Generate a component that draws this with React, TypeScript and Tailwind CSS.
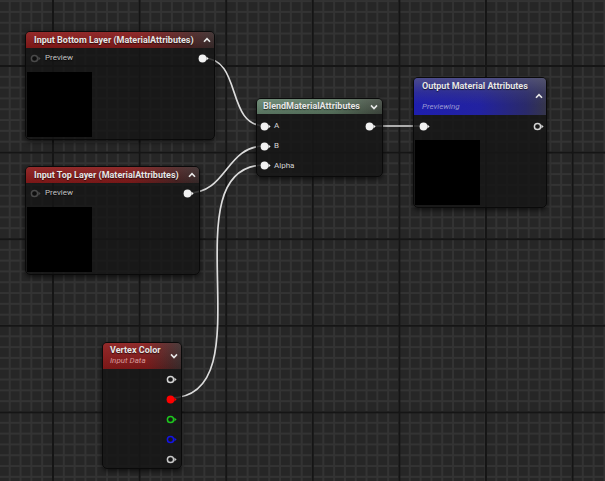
import React from "react";

type PinKind = "filled" | "hollow" | "dark";

function Pin({ kind, color }: { kind: PinKind; color: string }) {
  return (
    <svg width="11" height="9" viewBox="0 0 11 9" className="shrink-0 block">
      {kind === "filled" ? (
        <circle cx="4.5" cy="4.5" r="3.9" fill={color} />
      ) : (
        <circle
          cx="4.5"
          cy="4.5"
          r="3.1"
          fill={kind === "dark" ? "#0e0e0e" : "none"}
          stroke={color}
          strokeWidth="1.5"
        />
      )}
      <path d="M8.4 2.6 L10.6 4.5 L8.4 6.4 Z" fill={color} />
    </svg>
  );
}

function Chevron({ up }: { up?: boolean }) {
  return (
    <svg width="8" height="6" viewBox="0 0 8 6" className="shrink-0 block">
      {up ? (
        <polyline points="1,4.8 4,1.6 7,4.8" fill="none" stroke="#e8e8e8" strokeWidth="1.6" />
      ) : (
        <polyline points="1,1.4 4,4.5 7,1.4" fill="none" stroke="#e8e8e8" strokeWidth="1.6" />
      )}
    </svg>
  );
}

const font = "font-['Roboto','Liberation_Sans',sans-serif]";

export default function App() {
  return (
    <div
      className={`relative w-[605px] h-[481px] overflow-hidden ${font} [background-color:#262626] [background-image:linear-gradient(to_right,#151515_2px,transparent_2px),linear-gradient(to_bottom,#151515_2px,transparent_2px),linear-gradient(to_right,#333333_2px,transparent_2px),linear-gradient(to_bottom,#333333_2px,transparent_2px)] [background-size:86.6px_86.6px,86.6px_86.6px,10.825px_10.825px,10.825px_10.825px] [background-position:52px_65px]`}
    >
      {/* wires */}
      <svg width="605" height="481" className="absolute left-0 top-0">
        <g fill="none" stroke="#dcdcdc" strokeWidth="1.7" strokeLinecap="round">
          <path d="M203 58 C243 58 225 126 265 126" />
          <path d="M188 193 C228 193 225 146 265 146" />
          <path d="M170 398 C270 398 165 165 265 165" />
          <path d="M369 126 L424 126" />
        </g>
      </svg>

      {/* Input Bottom Layer */}
      <div className="absolute left-[25px] top-[31px] w-[190px] h-[109px] rounded-[5px] border border-[#0a0a0a] bg-[rgba(22,22,22,0.82)] shadow-[0_2px_5px_rgba(0,0,0,0.6)] overflow-hidden flex flex-col">
        <div className="h-[16px] shrink-0 flex items-center justify-between pl-[8px] pr-[3px] bg-[linear-gradient(to_bottom,rgba(255,255,255,0.07),rgba(0,0,0,0.12)),linear-gradient(to_right,#8c1a1a_0%,#861b1b_60%,#4c2525_88%,#3a2c2c_100%)]">
          <span className="text-[9px] font-bold leading-none text-[#e6e6e6] whitespace-nowrap [text-shadow:0_1px_1px_rgba(0,0,0,0.6)]">
            Input Bottom Layer (MaterialAttributes)
          </span>
          <Chevron up />
        </div>
        <div className="h-[20px] shrink-0 flex items-center justify-between pl-[4px] pr-[5px]">
          <div className="flex items-center gap-[4px]">
            <Pin kind="dark" color="#4a4a4a" />
            <span className="text-[8px] leading-none text-[#c4c4c4] [text-shadow:0_1px_1px_rgba(0,0,0,0.8)]">Preview</span>
          </div>
          <Pin kind="filled" color="#f2f2f2" />
        </div>
        <div className="ml-[1px] mt-[4px] w-[65px] h-[65px] bg-black" />
      </div>

      {/* Input Top Layer */}
      <div className="absolute left-[25px] top-[166px] w-[175px] h-[109px] rounded-[5px] border border-[#0a0a0a] bg-[rgba(22,22,22,0.82)] shadow-[0_2px_5px_rgba(0,0,0,0.6)] overflow-hidden flex flex-col">
        <div className="h-[16px] shrink-0 flex items-center justify-between pl-[8px] pr-[3px] bg-[linear-gradient(to_bottom,rgba(255,255,255,0.07),rgba(0,0,0,0.12)),linear-gradient(to_right,#8c1a1a_0%,#861b1b_60%,#4c2525_88%,#3a2c2c_100%)]">
          <span className="text-[9px] font-bold leading-none text-[#e6e6e6] whitespace-nowrap [text-shadow:0_1px_1px_rgba(0,0,0,0.6)]">
            Input Top Layer (MaterialAttributes)
          </span>
          <Chevron up />
        </div>
        <div className="h-[20px] shrink-0 flex items-center justify-between pl-[4px] pr-[5px]">
          <div className="flex items-center gap-[4px]">
            <Pin kind="dark" color="#4a4a4a" />
            <span className="text-[8px] leading-none text-[#c4c4c4] [text-shadow:0_1px_1px_rgba(0,0,0,0.8)]">Preview</span>
          </div>
          <Pin kind="filled" color="#f2f2f2" />
        </div>
        <div className="ml-[1px] mt-[4px] w-[65px] h-[65px] bg-black" />
      </div>

      {/* BlendMaterialAttributes */}
      <div className="absolute left-[256px] top-[98px] w-[127px] h-[79px] rounded-[5px] border border-[#0a0a0a] bg-[rgba(22,22,22,0.85)] shadow-[0_2px_5px_rgba(0,0,0,0.6)] overflow-hidden flex flex-col">
        <div className="h-[15px] shrink-0 flex items-center justify-between pl-[6px] pr-[4px] bg-[linear-gradient(to_bottom,rgba(255,255,255,0.1),rgba(0,0,0,0.1)),linear-gradient(to_right,#61806a_0%,#5a7660_60%,#485648_88%,#404840_100%)]">
          <span className="text-[9px] font-bold leading-none text-[#e6e6e6] whitespace-nowrap [text-shadow:0_1px_1px_rgba(0,0,0,0.6)]">
            BlendMaterialAttributes
          </span>
          <Chevron />
        </div>
        <div className="mt-[2px] h-[20px] shrink-0 flex items-center justify-between pl-[3px] pr-[6px]">
          <div className="flex items-center gap-[3px]">
            <Pin kind="filled" color="#f2f2f2" />
            <span className="text-[8px] leading-none text-[#d4d4d4]">A</span>
          </div>
          <Pin kind="filled" color="#f2f2f2" />
        </div>
        <div className="h-[20px] shrink-0 flex items-center pl-[3px]">
          <div className="flex items-center gap-[3px]">
            <Pin kind="filled" color="#f2f2f2" />
            <span className="text-[8px] leading-none text-[#d4d4d4]">B</span>
          </div>
        </div>
        <div className="h-[19px] shrink-0 flex items-center pl-[3px]">
          <div className="flex items-center gap-[3px]">
            <Pin kind="filled" color="#f2f2f2" />
            <span className="text-[8px] leading-none text-[#d4d4d4]">Alpha</span>
          </div>
        </div>
      </div>

      {/* Output Material Attributes */}
      <div className="absolute left-[413px] top-[77px] w-[134px] h-[131px] rounded-[5px] border border-[#0a0a0a] bg-[rgba(22,22,22,0.85)] shadow-[0_2px_5px_rgba(0,0,0,0.6)] overflow-hidden flex flex-col">
        <div className="h-[37px] shrink-0 flex flex-col pl-[8px] pr-[3px] pt-[2px] bg-[linear-gradient(to_bottom,rgba(95,95,125,0.7)_0%,rgba(70,70,120,0.35)_40%,rgba(0,0,0,0)_72%),linear-gradient(to_right,#1e1eae_0%,#2222a0_50%,#2a2a6a_85%,#35354a_100%)]">
          <span className="text-[9px] font-bold leading-[12px] text-[#e6e6e6] whitespace-nowrap [text-shadow:0_1px_1px_rgba(0,0,0,0.6)]">
            Output Material Attributes
          </span>
          <div className="h-[8px] flex items-center justify-end">
            <Chevron up />
          </div>
          <span className="mt-[2px] text-[8px] italic leading-[10px] text-[#9a9ad2] whitespace-nowrap">Previewing</span>
        </div>
        <div className="mt-[1px] h-[20px] shrink-0 flex items-center justify-between pl-[5px] pr-[2px]">
          <Pin kind="filled" color="#f2f2f2" />
          <Pin kind="hollow" color="#d4d4d4" />
        </div>
        <div className="ml-[1px] mt-[4px] w-[65px] h-[65px] bg-black" />
      </div>

      {/* Vertex Color */}
      <div className="absolute left-[102px] top-[342px] w-[80px] h-[127px] rounded-[5px] border border-[#0a0a0a] bg-[rgba(22,22,22,0.85)] shadow-[0_2px_5px_rgba(0,0,0,0.6)] overflow-hidden flex flex-col">
        <div className="h-[26px] shrink-0 flex items-center justify-between pl-[7px] pr-[3px] bg-[linear-gradient(to_bottom,rgba(255,255,255,0.07),rgba(0,0,0,0.12)),linear-gradient(to_right,#8c1a1a_0%,#861b1b_55%,#522626_85%,#3e2e2e_100%)]">
          <div className="flex flex-col self-start pt-[2px]">
            <span className="text-[9px] font-bold leading-[11px] text-[#e6e6e6] whitespace-nowrap [text-shadow:0_1px_1px_rgba(0,0,0,0.6)]">
              Vertex Color
            </span>
            <span className="text-[8px] italic leading-[10px] text-[#d89a9a] whitespace-nowrap">Input Data</span>
          </div>
          <Chevron />
        </div>
        <div className="h-[20px] shrink-0 flex items-center justify-end pr-[4px]">
          <Pin kind="hollow" color="#d4d4d4" />
        </div>
        <div className="h-[20px] shrink-0 flex items-center justify-end pr-[4px]">
          <Pin kind="filled" color="#ff0000" />
        </div>
        <div className="h-[20px] shrink-0 flex items-center justify-end pr-[4px]">
          <Pin kind="hollow" color="#1ec81e" />
        </div>
        <div className="h-[20px] shrink-0 flex items-center justify-end pr-[4px]">
          <Pin kind="hollow" color="#1414e6" />
        </div>
        <div className="h-[20px] shrink-0 flex items-center justify-end pr-[4px]">
          <Pin kind="hollow" color="#c8c8c8" />
        </div>
      </div>
    </div>
  );
}
